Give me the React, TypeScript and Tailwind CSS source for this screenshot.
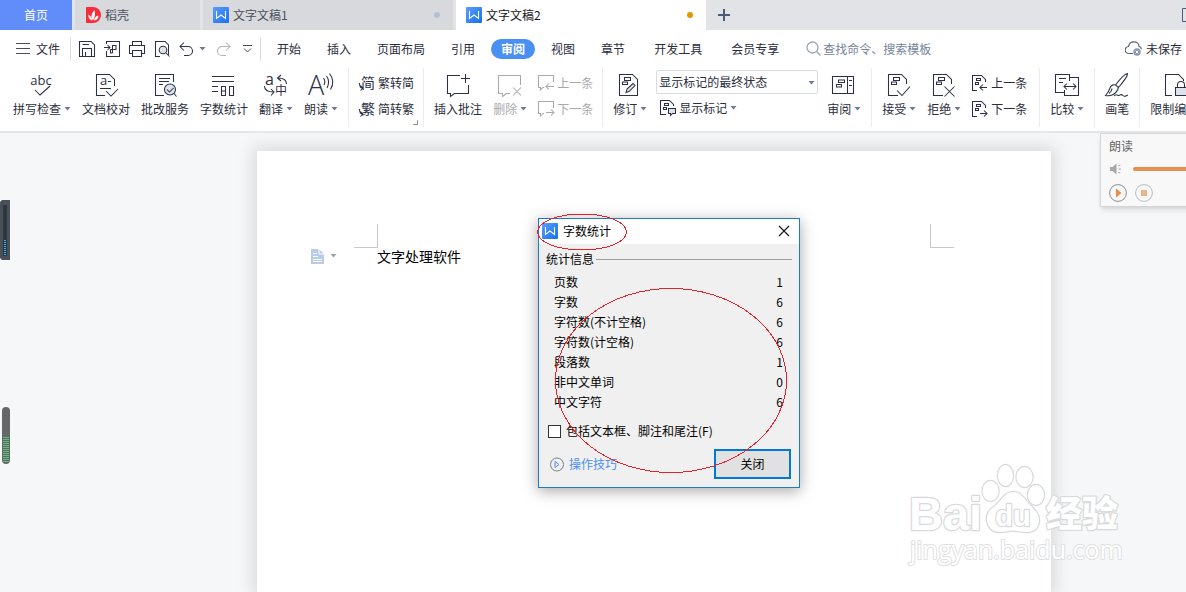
import React from 'react';

const INK = '#2b3048';

interface IconProps {
  size?: number;
  color?: string;
  children: React.ReactNode;
}

const Icon: React.FC<IconProps> = ({ size = 24, color = INK, children }) => (
  <svg width={size} height={size} viewBox={`0 0 ${size} ${size}`} fill="none" stroke={color} strokeWidth="1.05" className="shrink-0 overflow-visible" aria-hidden="true">
    {children}
  </svg>
);

const iconText = { stroke: 'none', fontFamily: '"Open Sans", "Noto Sans CJK SC", sans-serif' };
const hanText = { stroke: 'none', fontFamily: '"Noto Sans CJK SC", sans-serif' };

const Caret: React.FC<{ className?: string }> = ({ className = '' }) => (
  <svg width="7" height="4" viewBox="0 0 7 4" className={`shrink-0 ${className}`} aria-hidden="true">
    <path d="M.5 0h6L3.500 3.500z" fill="#6f7a92" />
  </svg>
);

const WLogo = () => (
  <svg width="16" height="16" viewBox="0 0 16 16" className="shrink-0" aria-hidden="true">
    <defs>
      <linearGradient id="wlogo" x1="0" y1="0" x2="1" y2="1">
        <stop offset="0" stopColor="#5c9dfa" />
        <stop offset="1" stopColor="#1670ee" />
      </linearGradient>
    </defs>
    <rect width="16" height="16" rx="1" fill="url(#wlogo)" />
    <path d="M3.500 4v7.500L8 8l4.500 3.500V4" fill="none" stroke="#fff" strokeWidth="1.100" />
  </svg>
);

/* page outline with two little change marks, shared by the revision icons */
const MarkedDoc = () => (
  <>
    <path d="M11 22.500H1.500V1.500H14.500L19.500 6.500V11" />
    <path d="M6.500 4.500h6v3h-6zM4.500 9h5v2.500h-5z" />
  </>
);

const SmallMarkedDoc = () => (
  <>
    <path d="M5 15.500H.5V.5H9.500L13.500 4.500V7" />
    <path d="M4.500 3.500h4v2h-4zM3.500 7.500h3v2h-3z" />
  </>
);

const icons = {
  spell: (
    <Icon>
      <text x="11" y="12" textAnchor="middle" fontSize="13" fill={INK} style={iconText}>abc</text>
      <path d="M5 17l5 5 10-9" />
    </Icon>
  ),
  proof: (
    <Icon>
      <path d="M11 22.500H2.500V1.500H15.500L20.500 6.500V13" />
      <text x="6" y="12" fontSize="13" fill={INK} style={iconText}>a-</text>
      <path d="M6 15.500h11M12 18l5 5 7-7" />
    </Icon>
  ),
  review: (
    <Icon>
      <path d="M11 22.500H2.500V1.500H20.500V9M6 5.500h11M6 8.500h10M6 11.500h4" />
      <circle cx="17" cy="16.500" r="5.500" fill="#dfe2e9" />
      <path d="M14 16.500l2.500 2.500 4-4M21 20.500l2.500 3" />
    </Icon>
  ),
  count: (
    <Icon>
      <path d="M0 3.500h22M0 8.500h22M0 13.500h6M0 18.500h6M9.500 13.500h4v9h-4zM9.500 18h4M17.500 13.500h4v9h-4z" />
    </Icon>
  ),
  translate: (
    <Icon>
      <text x="1" y="12" fontSize="16" fill={INK} style={iconText}>a</text>
      <text x="11" y="22" fontSize="12" fill={INK} style={hanText}>中</text>
      <path d="M22.500 11c0-4-3-6-8.500-6M17 2l-3.500 3L17 8M.5 13c0 4 3 6 9 6M7 16l3 3-3 3.500" />
    </Icon>
  ),
  read: (
    <Icon>
      <text x="-1" y="22" fontSize="27" fontWeight="300" fill={INK} style={iconText}>A</text>
      <path d="M14.500 5c1.500 2 1.500 5 .5 7M17.500 3c2.500 3.500 2.500 8 .5 12M20.500.5c4 5 4 11 1 16" />
    </Icon>
  ),
  addComment: (
    <Icon>
      <path d="M14 2.500H1.500V20.500H4.500V23.500L8.500 20.500H22.500V12M15 5.500h9M19.500 1v9" />
    </Icon>
  ),
  delComment: (
    <Icon color="#a9a9ac">
      <path d="M12 20.500H8.500L4.500 23.500V20.500H.5V2.500H22.500V12M15 14.500l8 8M23 14.500l-8 8" />
    </Icon>
  ),
  track: (
    <Icon>
      <path d="M1.500 22.500V1.500H14.500L19.500 6.500V22.500ZM6.500 4.500h6v3h-6zM4.500 9h5v2.500h-5z" />
      <path d="M8 19.500l1-3.500 6-5.500 2 2-6 6z" fill="#dfe2e9" />
    </Icon>
  ),
  pane: (
    <Icon>
      <path d="M.5 3.500h21v17h-21zM15.500 3.500v17M6.500 7h6v2.500h-6zM4.500 11.500h5V14h-5zM17 7.500h3M17 12.500h3" />
    </Icon>
  ),
  accept: (
    <Icon>
      <MarkedDoc />
      <path d="M10 17.500l5 5 8-9" />
    </Icon>
  ),
  reject: (
    <Icon>
      <MarkedDoc />
      <path d="M12.500 13.500l10 10M22.500 13.500l-10 10" />
    </Icon>
  ),
  compare: (
    <Icon>
      <path d="M14.500 4.500V1.500H.5V19.500H9.500M4 5.500h7M4 9.500h4M14.500 8V4.500H23.500V22.500H9.500V17M9 13.500h12M12 10.500l-3 3 3 3M18 10.500l3 3-3 3" />
    </Icon>
  ),
  brush: (
    <Icon>
      <path d="M22.500.5c-2 0-7 5-12 11.500l3 2.500C19 8 23 3 22.500.5zM10.500 12c-2-.5-4.500 0-5.500 3-1 3-2 5-4.500 7.500 5 1 11-1 13-8M7 15.500c0 2-1 3.500-3 5M9 23c2-3 4 0 5-.5s2-2 4 0 3 0 5-.5" />
    </Icon>
  ),
  lock: (
    <Icon>
      <path d="M10 22.500H3.500V1.500H16.500L21.500 6.500V8" />
      <path d="M15.500 14v-2a3.500 3.500 0 0 1 7 0v2" />
      <path d="M13.500 14.500h12v8h-12z" fill="#dfe2e9" />
    </Icon>
  ),
  toSimple: (
    <Icon size={16}>
      <text x="2" y="13" fontSize="14" fill={INK} style={hanText}>简</text>
      <path d="M.5 8c0 4 1 5 3 5M1.500 10.500L4 13l-2.500 2.500" />
    </Icon>
  ),
  toTraditional: (
    <Icon size={16}>
      <text x="2" y="13" fontSize="14" fill={INK} style={hanText}>繁</text>
      <path d="M.5 8c0 4 1 5 3 5M1.500 10.500L4 13l-2.500 2.500" />
    </Icon>
  ),
  prevComment: (
    <Icon size={16} color="#a9a9ac">
      <path d="M6 12.500H5L2.500 15V12.500H.5V.5H15.500V7M8 11.500h8M11 8.500l-3 3 3 3" />
    </Icon>
  ),
  nextComment: (
    <Icon size={16} color="#a9a9ac">
      <path d="M6 12.500H5L2.500 15V12.500H.5V.5H15.500V7M8 11.500h8M13 8.500l3 3-3 3" />
    </Icon>
  ),
  prevMark: (
    <Icon size={16}>
      <SmallMarkedDoc />
      <path d="M8 12.500h7M11 9.500l-3 3 3 3" />
    </Icon>
  ),
  nextMark: (
    <Icon size={16}>
      <SmallMarkedDoc />
      <path d="M8 12.500h7M12 9.500l3 3-3 3" />
    </Icon>
  ),
  showMark: (
    <Icon size={16}>
      <path d="M6 14.500H.5V.5H9.500L13.500 4.500V6M4.500 3.500h4v2h-4zM3.500 7.500h3v2h-3z" />
      <path d="M8.500 8.500h7v5h-3l-2 2v-2h-2z" fill="#dfe2e9" />
    </Icon>
  ),
};

interface ToolProps {
  icon: React.ReactNode;
  label: string;
  menu?: boolean;
  disabled?: boolean;
}

const BigTool: React.FC<ToolProps> = ({ icon, label, menu, disabled }) => (
  <button disabled={disabled} className={`flex shrink-0 flex-col items-center gap-1 ${disabled ? 'text-[#a9a9ac]' : ''}`}>
    {icon}
    <span className="flex items-center leading-4 whitespace-nowrap">
      {label}
      {menu && <Caret className="ml-[3px]" />}
    </span>
  </button>
);

const SmallTool: React.FC<ToolProps> = ({ icon, label, menu, disabled }) => (
  <button disabled={disabled} className={`flex h-4 items-center gap-[3px] whitespace-nowrap ${disabled ? 'text-[#a9a9ac]' : ''}`}>
    {icon}
    {label}
    {menu && <Caret />}
  </button>
);

const Pair: React.FC<{ children: React.ReactNode }> = ({ children }) => (
  <div className="flex shrink-0 flex-col gap-[10px] pt-[2px]">{children}</div>
);

const Group: React.FC<{ className?: string; children: React.ReactNode }> = ({ className = 'pl-[10px] pr-[9px]', children }) => (
  <div className={`relative flex shrink-0 gap-[11px] border-r border-[#ececef] pt-[5px] ${className}`}>{children}</div>
);

const TabBar = () => (
  <div className="flex h-[30px] gap-[3px] overflow-hidden bg-[#e2e3e7] text-[#4b4f5c]">
    <button className="w-[72px] shrink-0 bg-[#618dfa] text-white">首页</button>
    <button className="flex w-[125px] shrink-0 items-center gap-1 bg-[#d8d9dd] pl-[10px]">
      <svg width="16" height="16" viewBox="0 0 16 16" aria-hidden="true">
        <path d="M1.500 0H8a8 8 0 0 1 0 16H1.500Q1 16 1 15V1Q1 0 1.500 0z" fill="#fb2c3a" />
        <path d="M8 13.500C5.500 10 6.500 6 9.500 3c1 4 .5 7-1.500 10.500zM7 13.500C4 12.500 3 10 3.500 7.500 6 9 7 11 7 13.500zM9 13.500c.5-3 2-4.500 4.500-5 0 3-1.500 4.500-4.500 5z" fill="#fff" />
      </svg>
      稻壳
    </button>
    <button className="flex w-[250px] shrink-0 items-center gap-1 bg-[#d8d9dd] pr-[13px] pl-[10px]">
      <WLogo />
      文字文稿1
      <span className="ml-auto size-[6px] rounded-full bg-[#b4bfd3]" />
    </button>
    <button className="flex w-[250px] shrink-0 items-center gap-1 bg-white pr-[13px] pl-[10px] text-[#15161c]">
      <WLogo />
      文字文稿2
      <span className="ml-auto size-[6px] rounded-full bg-[#e59700]" />
    </button>
    <button aria-label="新建" className="shrink-0 pl-[9px]">
      <svg width="12" height="12" viewBox="0 0 12 12" stroke="#4c5b7c" strokeWidth="2"><path d="M0 6h12M6 0v12" /></svg>
    </button>
    <button aria-label="窗口" className="ml-auto w-1 shrink-0 overflow-hidden">
      <svg width="14" height="14" viewBox="0 0 14 14" fill="none" stroke="#4c5b7c"><path d="M.5.5h13v13H.5z" /></svg>
    </button>
  </div>
);

const quickTools = [
  { id: '保存', art: <path d="M.5 .5H12L15.500 4V15.500H.5ZM3.500 15V7.500H12.500V15M3.500 3.500H10M6.500 11v4" /> },
  { id: '输出', art: <path d="M2.500 3V.5H15.500V15.500H2.500V10M0 6.500h6M3.500 4l2.500 2.500L3.500 9M8.500 12V4.500h3.500v4H6.500v3.500h2" /> },
  { id: '打印', art: <path d="M3.500 4.500V.5H12.500V4.500M3 12.500H.5V4.500H15.500V12.500H13M3.500 9.500h9v6h-9z" /> },
  { id: '预览', art: <><path d="M6 15.500H1.500V.5H11L14.500 4V14" /><circle cx="9" cy="9" r="3.800" fill="#dfe2e9" /><path d="M12 12l3.500 3.500" /></> },
];

const menuItems = ['开始', '插入', '页面布局', '引用', '审阅', '视图', '章节', '开发工具', '会员专享'];

const MenuRow = () => (
  <div className="flex h-9 items-center overflow-hidden pt-px">
    <button className="flex shrink-0 items-center gap-[6px] pl-4">
      <svg width="14" height="11" viewBox="0 0 14 11" stroke="#4a4d58"><path d="M0 .5h14M0 5.500h14M0 10.500h14" /></svg>
      文件
    </button>
    <div className="mr-2 ml-[10px] h-6 w-px shrink-0 bg-[#dcdde1]" />
    <div className="flex shrink-0 items-center gap-[9px]">
      {quickTools.map((t) => (
        <button key={t.id} aria-label={t.id}><Icon size={16}>{t.art}</Icon></button>
      ))}
      <button aria-label="撤销" className="flex items-center gap-1">
        <Icon size={16}><path d="M5 1.500L1 5.500l4 4M1.500 5.500H9a4.500 4.500 0 0 1 0 9H5" /></Icon>
        <Caret />
      </button>
      <button aria-label="恢复" disabled>
        <Icon size={16} color="#b5b5b8"><path d="M11 1.500l4 4-4 4M14.500 5.500H7a4.500 4.500 0 0 0 0 9h4" /></Icon>
      </button>
      <button aria-label="自定义" className="pl-[3px]">
        <svg width="9" height="8" viewBox="0 0 9 8" fill="none" stroke="#4a4d58"><path d="M0 .5h9M1 3.500L4.500 7 8 3.500" /></svg>
      </button>
    </div>
    <div className="mr-[6px] ml-2 h-6 w-px shrink-0 bg-[#dcdde1]" />
    <nav className="flex shrink-0 gap-[6px]">
      {menuItems.map((m) => (
        <button
          key={m}
          className={`h-5 rounded-full whitespace-nowrap ${m === '开发工具' ? 'px-[13px]' : 'px-[10px]'} ${m === '审阅' ? 'bg-[#4a90f3] font-bold text-white' : ''}`}
        >
          {m}
        </button>
      ))}
    </nav>
    <label className="ml-[17px] flex items-center gap-[2px]">
      <svg width="15" height="15" viewBox="0 0 15 15" fill="none" stroke="#9aa3b5" strokeWidth="1.300"><circle cx="6.500" cy="6.500" r="5.500" /><path d="M10.500 10.500l4 4" /></svg>
      <input type="text" aria-label="查找" placeholder="查找命令、搜索模板" className="w-32 outline-none placeholder:text-[#75839b]" />
    </label>
    <button className="ml-auto flex shrink-0 items-center gap-1 pr-1">
      <svg width="17" height="15" viewBox="0 0 17 15" fill="none" stroke="#596175" strokeWidth="1.200">
        <path d="M8 12.500H4A3.500 3.500 0 0 1 3.500 5.500C4 2.500 6.500.8 9 .8c3 0 5 2 5 4.500 1.500.5 2.300 1.700 2.300 3" />
        <circle cx="12" cy="11" r="3.700" fill="#8c97b0" stroke="none" />
        <path d="M10.700 9.700l2.600 2.600M13.300 9.700l-2.600 2.600" stroke="#fff" strokeWidth="1" />
      </svg>
      未保存
    </button>
  </div>
);

const Ribbon = () => (
  <div className="flex h-[67px] overflow-hidden border-b-2 border-[#e5e6e8] pt-[2px] pb-1">
    <Group className="pr-[10px] pl-[13px]">
      <BigTool icon={icons.spell} label="拼写检查" menu />
      <BigTool icon={icons.proof} label="文档校对" />
      <BigTool icon={icons.review} label="批改服务" />
      <BigTool icon={icons.count} label="字数统计" />
      <BigTool icon={icons.translate} label="翻译" menu />
      <BigTool icon={icons.read} label="朗读" menu />
    </Group>
    <Group>
      <Pair>
        <SmallTool icon={icons.toSimple} label="繁转简" />
        <SmallTool icon={icons.toTraditional} label="简转繁" />
      </Pair>
      <span className="absolute right-[5px] bottom-[2px] size-[5px] border-r border-b border-[#8a93a6]" />
    </Group>
    <Group>
      <BigTool icon={icons.addComment} label="插入批注" />
      <BigTool icon={icons.delComment} label="删除" menu disabled />
      <Pair>
        <SmallTool icon={icons.prevComment} label="上一条" disabled />
        <SmallTool icon={icons.nextComment} label="下一条" disabled />
      </Pair>
    </Group>
    <Group className="pr-[10px] pl-[10px]">
      <BigTool icon={icons.track} label="修订" menu />
      <div className="-mt-[3px] -ml-[2px] flex w-[162px] shrink-0 flex-col gap-[6px]">
        <div className="relative">
          <select aria-label="显示状态" className="block h-6 w-full appearance-none rounded-[2px] border border-[#d9dbe0] bg-white pl-[2px]">
            <option>显示标记的最终状态</option>
          </select>
          <Caret className="pointer-events-none absolute top-[11px] right-[3px]" />
        </div>
        <div className="pl-1"><SmallTool icon={icons.showMark} label="显示标记" menu /></div>
      </div>
      <div className="-ml-[2px] flex"><BigTool icon={icons.pane} label="审阅" menu /></div>
    </Group>
    <Group className="pr-3 pl-[10px]">
      <BigTool icon={icons.accept} label="接受" menu />
      <BigTool icon={icons.reject} label="拒绝" menu />
      <Pair>
        <SmallTool icon={icons.prevMark} label="上一条" />
        <SmallTool icon={icons.nextMark} label="下一条" />
      </Pair>
    </Group>
    <Group className="px-[10px]"><BigTool icon={icons.compare} label="比较" menu /></Group>
    <Group className="px-[10px]"><BigTool icon={icons.brush} label="画笔" /></Group>
    <Group><BigTool icon={icons.lock} label="限制编辑" /></Group>
  </div>
);

const stats = [
  ['页数', 1],
  ['字数', 6],
  ['字符数(不计空格)', 6],
  ['字符数(计空格)', 6],
  ['段落数', 1],
  ['非中文单词', 0],
  ['中文字符', 6],
];

const CountDialog = () => (
  <div role="dialog" aria-label="字数统计" className="absolute top-[85px] left-[538px] w-[262px] border border-[#1c7cca] bg-[#f0f0f0] text-black shadow-[0_3px_14px_rgba(0,0,0,0.35)]">
    <div className="flex h-[25px] items-center bg-white pr-[9px] pb-px pl-[3px]">
      <WLogo />
      <span className="pl-[5px]">字数统计</span>
      <button aria-label="关闭窗口" className="ml-auto">
        <svg width="12" height="12" viewBox="0 0 12 12" stroke="#111" strokeWidth="1.100"><path d="M1 1l10 10M11 1L1 11" /></svg>
      </button>
    </div>
    <div className="px-[7px] pt-[6px] pb-2">
      <div className="flex h-[18px] items-center gap-[2px]">
        统计信息
        <span className="h-px flex-1 bg-[#a0a0a0]" />
      </div>
      <table className="mt-1 ml-2 w-[229px]">
        <tbody>
          {stats.map(([name, value]) => (
            <tr key={name} className="h-5">
              <th scope="row" className="p-0 text-left font-normal">{name}</th>
              <td className="p-0 text-right">{value}</td>
            </tr>
          ))}
        </tbody>
      </table>
      <label className="mt-[10px] flex h-[18px] items-center gap-[5px] pl-[2px]">
        <input type="checkbox" className="size-[13px] appearance-none border border-[#333] bg-white" />
        包括文本框、脚注和尾注(F)
      </label>
      <div className="mt-[9px] flex items-center justify-between pr-[1px] pl-1">
        <a href="#tips" className="flex items-center gap-1 text-[#4a90f3]">
          <svg width="15" height="15" viewBox="0 0 15 15" fill="none">
            <circle cx="7" cy="7.500" r="6.500" stroke="#7a7f88" />
            <path d="M5 4.500v6l4-3z" stroke="#4a90f3" />
          </svg>
          操作技巧
        </a>
        <button className="h-[30px] w-[77px] border-2 border-[#0078d7] bg-[#e1e1e1]">关闭</button>
      </div>
    </div>
  </div>
);

const ReadPanel = () => (
  <div className="absolute top-0 -right-[114px] h-[74px] w-[200px] border border-[#d4d5d8] bg-[#f8f8f8] pt-[3px] pl-2 text-[#666] shadow-md">
    <div className="leading-[18px]">朗读</div>
    <div className="mt-2 flex items-center">
      <svg width="12" height="12" viewBox="0 0 12 12" fill="#a8a8a8" aria-hidden="true">
        <path d="M1 4h2.500L7.500.5v11L3.500 8H1zM9 2.500l2-1 .5.700-2 1zM9.500 5.500H12v1H9.500zM9 9.500l.5-.7 2 1-.5.700z" />
      </svg>
      <input type="range" aria-label="音量" defaultValue={100} className="ml-3 h-1 w-[140px] appearance-none rounded-full bg-[#e88e50]" />
    </div>
    <div className="mt-[9px] flex gap-2">
      <button aria-label="播放">
        <svg width="18" height="18" viewBox="0 0 18 18"><circle cx="9" cy="9" r="8.400" fill="none" stroke="#8e8e8e" /><path d="M7 4.500v9L12.500 9z" fill="#e98a45" /></svg>
      </button>
      <button aria-label="停止">
        <svg width="18" height="18" viewBox="0 0 18 18"><circle cx="9" cy="9" r="8.400" fill="none" stroke="#bcbcbc" /><path d="M6 6h6v6H6z" fill="#e9b48d" /></svg>
      </button>
    </div>
  </div>
);

const Watermark = () => (
  <svg
    width="224"
    height="110"
    viewBox="0 0 224 110"
    className="pointer-events-none absolute right-[58px] bottom-6"
    fill="#ffffff"
    stroke="#d9dadc"
    strokeWidth="2.500"
    strokeLinejoin="round"
    style={{ paintOrder: 'stroke' }}
  >
    <text x="5" y="72" fontSize="47" fontWeight="700" fontFamily="Liberation Sans, sans-serif">Bai</text>
    <ellipse cx="86.500" cy="33" rx="8" ry="10" />
    <ellipse cx="101.500" cy="17.500" rx="7.500" ry="10.500" />
    <ellipse cx="120.500" cy="19" rx="8" ry="10" />
    <ellipse cx="132" cy="37" rx="8" ry="10" />
    <path d="M109 34c-8 0-11 8-17 13-6 4-10 9-9 15 1 8 6 12 13 12 5 0 9-1.500 13-1.500S118 74 123 74c8 0 12-5 12-12 0-6-4-10-9-15-6-6-9-13-17-13z" />
    <text x="109" y="68" textAnchor="middle" fontSize="29" fontWeight="700" fontFamily="Liberation Sans, sans-serif">du</text>
    <text x="142" y="69" fontSize="36" fontWeight="900" fontFamily="Noto Sans CJK SC, sans-serif">经验</text>
    <text x="6" y="101" fontSize="25" strokeWidth="2" stroke="#dfe0e2" fontFamily="Open Sans, sans-serif">jingyan.baidu.com</text>
  </svg>
);

const SideMeters = () => (
  <>
    <svg width="10" height="60" viewBox="0 0 10 60" className="absolute top-[67px] left-0" aria-hidden="true">
      <path d="M0 2l2-2h8v60H2l-2-2z" fill="#4a5057" />
      <path d="M3 5h4v51H3z" fill="#2c3742" />
      <path d="M5 40v16" stroke="#29b6f6" strokeWidth="2" strokeDasharray="1 1" />
    </svg>
    <svg width="8" height="57" viewBox="0 0 8 57" className="absolute top-[274px] left-[2px]" aria-hidden="true">
      <rect width="8" height="57" rx="4" fill="#66676a" />
      <path d="M4 30v25" stroke="#57c274" strokeWidth="6" strokeDasharray="1 1" />
    </svg>
  </>
);

const App = () => (
  <div className="flex h-screen flex-col overflow-hidden bg-white font-['Noto_Sans_CJK_SC',sans-serif] text-xs text-[#2a2d3c]">
    <TabBar />
    <MenuRow />
    <Ribbon />
    <main className="relative flex flex-1 overflow-hidden bg-[#f6f7f9] pt-[18px] pl-[122px]">
      <article className="mx-auto w-full max-w-[794px] bg-white px-[97px] pt-[73px] shadow-[0_0_16px_4px_rgba(0,0,0,0.12)]">
        <div className="flex justify-between">
          <span className="h-6 w-6 border-r border-b border-[#c8c8c8]" />
          <span className="h-6 w-6 border-b border-l border-[#c8c8c8]" />
        </div>
        <div className="-ml-[43px] flex h-4 items-center text-sm text-black">
          <svg width="13" height="15" viewBox="0 0 13 15" aria-hidden="true">
            <path d="M0 0h8l5 5v10H0z" fill="#b9cbe8" />
            <path d="M8 0v5h5M2 4.500h4M2 7.500h5M2 10.500h9M2 12.500h9" stroke="#fff" fill="none" />
          </svg>
          <Caret className="ml-[6px] opacity-70" />
          <p className="pl-[40px]">文字处理软件</p>
        </div>
      </article>
      <CountDialog />
      <svg width="252" height="262" viewBox="0 0 252 262" fill="none" stroke="#e8202a" shapeRendering="crispEdges" className="pointer-events-none absolute top-[80px] left-[537px]" aria-hidden="true">
        <ellipse cx="45" cy="19" rx="44.500" ry="18" />
        <ellipse cx="134" cy="167.500" rx="115.500" ry="92" />
      </svg>
      <ReadPanel />
      <SideMeters />
      <Watermark />
    </main>
  </div>
);

export default App;
